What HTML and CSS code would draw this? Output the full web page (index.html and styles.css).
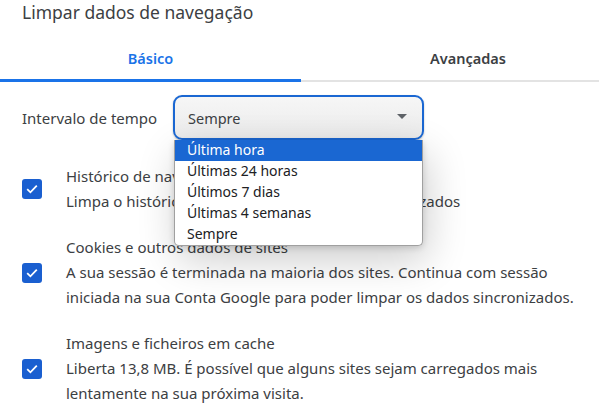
FILE: index.html
```html
<!DOCTYPE html>
<html lang="pt">
<head>
<meta charset="utf-8">
<link rel="stylesheet" href="styles.css">
</head>
<body>
<div class="dialog">
  <h1 class="title">Limpar dados de navegação</h1>
  <div class="tabs">
    <div class="tab active">Básico</div>
    <div class="tab second">Avançadas</div>
  </div>
  <div class="content">
    <div class="range-row">
      <span class="range-label">Intervalo de tempo</span>
      <div class="select-wrap">
        <div class="select">
          <span>Sempre</span>
          <svg class="arrow" width="10" height="5" viewBox="0 0 10 5"><path d="M0 0h10L5 5z" fill="#5f6368"/></svg>
        </div>
        <ul class="options">
          <li class="selected">Última hora</li>
          <li>Últimas 24 horas</li>
          <li>Últimos 7 dias</li>
          <li>Últimas 4 semanas</li>
          <li>Sempre</li>
        </ul>
      </div>
    </div>
    <div class="item">
      <span class="check"><svg width="12" height="10" viewBox="0 0 12 10"><path d="M1.2 5.2l3.2 3.1L10.8 1.6" fill="none" stroke="#fff" stroke-width="1.8"/></svg></span>
      <div class="item-text">
        <div>Histórico de navegação</div>
        <div>Limpa o histórico de todos os dispositivos sincronizados</div>
      </div>
    </div>
    <div class="item">
      <span class="check"><svg width="12" height="10" viewBox="0 0 12 10"><path d="M1.2 5.2l3.2 3.1L10.8 1.6" fill="none" stroke="#fff" stroke-width="1.8"/></svg></span>
      <div class="item-text">
        <div>Cookies e outros dados de sites</div>
        <div>A sua sessão é terminada na maioria dos sites. Continua com sessão iniciada na sua Conta Google para poder limpar os dados sincronizados.</div>
      </div>
    </div>
    <div class="item">
      <span class="check"><svg width="12" height="10" viewBox="0 0 12 10"><path d="M1.2 5.2l3.2 3.1L10.8 1.6" fill="none" stroke="#fff" stroke-width="1.8"/></svg></span>
      <div class="item-text">
        <div>Imagens e ficheiros em cache</div>
        <div>Liberta 13,8 MB. É possível que alguns sites sejam carregados mais lentamente na sua próxima visita.</div>
      </div>
    </div>
  </div>
</div>
</body>
</html>
```
FILE: styles.css
```css
* { box-sizing: border-box; }
html, body { margin: 0; padding: 0; background: #fff; }
body {
  font-family: "Segoe UI", "Noto Sans", "Open Sans", sans-serif;
  color: #3c4043;
  width: 599px;
  height: 416px;
  overflow: hidden;
}
.dialog { width: 599px; }
.title {
  margin: 0;
  padding: 0 22px;
  font-size: 17.5px;
  font-weight: 400;
  line-height: 25px;
  color: #3c4043;
}
.tabs {
  display: flex;
  margin-top: 19px;
  border-bottom: 2px solid #e3e3e3;
}
.tab {
  text-align: center;
  font-size: 14.5px;
  font-weight: 600;
  color: #3c4043;
  height: 36px;
  line-height: 24px;
  padding-top: 2px;
}
.tab.active {
  width: 301px;
  color: #1a73e8;
  border-bottom: 3px solid #1a73e8;
  margin-bottom: -2px;
  height: 38px;
}
.tab.second {
  flex: 1;
  padding-left: 36px;
}
.content { padding: 13px 0 0 22px; }
.range-row {
  display: flex;
  align-items: center;
  height: 45px;
}
.range-label {
  font-size: 15px;
  width: 151px;
}
.select-wrap { position: relative; }
.select {
  width: 251px;
  height: 45px;
  border: 2px solid #1a67d2;
  border-radius: 9px;
  background: linear-gradient(#f6f6f6, #ebebeb);
  box-shadow: 0 1px 2px rgba(0,0,0,0.25);
  display: flex;
  align-items: center;
  justify-content: space-between;
  padding: 0 15px 0 13px;
  font-size: 14.5px;
  color: #3c4043;
}
.arrow { margin-top: -2px; }
.options {
  position: absolute;
  left: 1px;
  top: 45px;
  width: 249px;
  margin: 0;
  padding: 0;
  list-style: none;
  background: #fff;
  border: 1px solid #a0a0a0;
  border-top: none;
  border-radius: 0 0 5px 5px;
  box-shadow: 4px 14px 40px rgba(0,0,0,0.2), 0 2px 6px rgba(0,0,0,0.15);
  font-size: 14px;
  color: #202124;
  z-index: 2;
}
.options li {
  height: 21px;
  line-height: 20px;
  padding-left: 12px;
}
.options li.selected {
  background: #1a67d2;
  color: #fff;
}
.item {
  display: flex;
  align-items: center;
  margin-top: 24px;
}
.item + .item { margin-top: 21px; }
.check {
  width: 20px;
  height: 20px;
  border-radius: 3px;
  background: #1a5fd0;
  display: flex;
  align-items: center;
  justify-content: center;
  flex: none;
  margin-right: 24px;
}
.item-text {
  font-size: 15px;
  line-height: 25px;
  color: #3c4043;
  width: 510px;
}
```
